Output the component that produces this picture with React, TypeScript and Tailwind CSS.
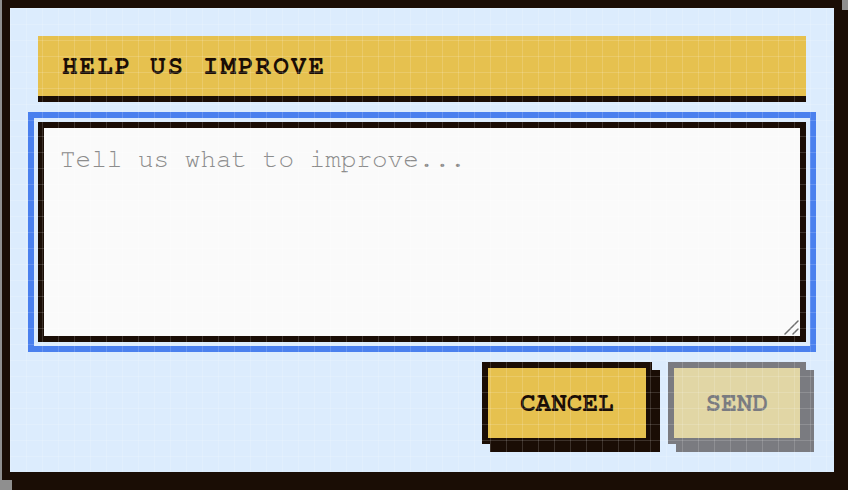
import { useState } from "react";

const mono = "font-['Nimbus_Mono_PS','Nimbus_Mono_L',FreeMono,'Courier_New',Courier,'Liberation_Mono',monospace]";

export default function App() {
  const [text, setText] = useState("");

  return (
    <div className="h-screen overflow-hidden bg-[#8f8f8f] pl-[2px]">
      <div className="relative w-[840px] border-8 border-[#1a0d05] bg-[#dcecfd] p-7 shadow-[10px_10px_0_#1a0d05]">
        <div className={`flex h-[66px] items-center border-b-[6px] border-[#1a0d05] bg-[#e6c14f] px-6 ${mono}`}>
          <h2 className="text-[26px] leading-[30px] font-bold tracking-[2px] text-[#1a0d05]">HELP US IMPROVE</h2>
        </div>

        <div className="relative mt-5">
          <textarea
            value={text}
            onChange={(e) => setText(e.target.value)}
            placeholder="Tell us what to improve..."
            className={`block h-[220px] w-full resize-none border-[6px] border-[#1a0d05] bg-[#fafafa] p-4 text-[26px] leading-[30px] text-[#1a0d05] outline-[6px] outline-offset-4 outline-solid outline-[#4a80ee] placeholder:text-[#8c8c8c] ${mono}`}
          />
          {/* resize grip */}
          <svg
            className="pointer-events-none absolute right-[6px] bottom-[6px]"
            width="16"
            height="16"
            viewBox="0 0 16 16"
          >
            <path d="M1 14L14 1M9 14L14 9" stroke="#6f6f6f" strokeWidth="1.5" strokeLinecap="round" />
          </svg>
        </div>

        <div className={`mt-5 flex justify-end gap-4 ${mono}`}>
          <button className="border-[6px] border-[#1a0d05] bg-[#e6c14f] px-8 py-5 text-[26px] leading-[30px] font-bold text-[#1a0d05] shadow-[8px_8px_0_#1a0d05]">
            CANCEL
          </button>
          <button
            disabled={text.trim() === ""}
            className="border-[6px] border-[#1a0d05] bg-[#e6c14f] px-8 py-5 text-[26px] leading-[30px] font-bold text-[#1a0d05] shadow-[8px_8px_0_#1a0d05] disabled:opacity-50"
          >
            SEND
          </button>
        </div>

        {/* faint pixel grid laid over the whole panel */}
        <div className="pointer-events-none absolute inset-0 bg-[linear-gradient(to_right,rgba(255,255,255,0.15)_1px,transparent_1px),linear-gradient(to_bottom,rgba(255,255,255,0.15)_1px,transparent_1px)] bg-[size:16px_16px]" />
      </div>
    </div>
  );
}
